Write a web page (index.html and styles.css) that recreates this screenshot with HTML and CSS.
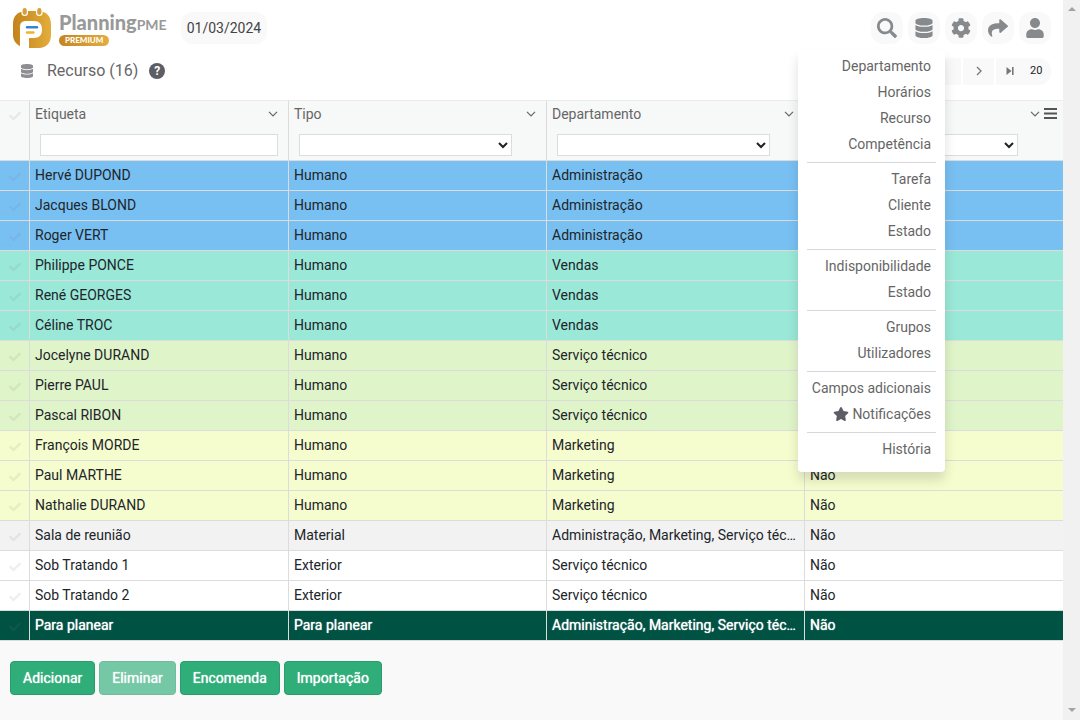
FILE: index.html
```html
<!DOCTYPE html>
<html lang="pt">
<head>
<meta charset="utf-8">
<title>PlanningPME - Recurso</title>
<link rel="stylesheet" href="styles.css">
</head>
<body>
<svg class="defs" aria-hidden="true">
  <symbol id="database" viewBox="0 0 448 512"><path d="M448 73.1v45.800C448 159.100 347.700 192 224 192S0 159.100 0 118.900V73.100C0 32.900 100.300 0 224 0s224 32.900 224 73.100zM448 176v102.900C448 319.100 347.700 352 224 352S0 319.100 0 278.900V176c48.100 33.100 136.200 48.600 224 48.600S399.900 209.100 448 176zm0 160v102.900C448 479.100 347.700 512 224 512S0 479.100 0 438.900V336c48.100 33.100 136.200 48.600 224 48.600S399.900 369.100 448 336z"/></symbol>
  <symbol id="check" viewBox="0 0 512 512"><path d="M173.900 439.400l-166.400-166.400c-10-10-10-26.200 0-36.200l36.200-36.200c10-10 26.200-10 36.200 0L192 312.700 432.100 72.600c10-10 26.200-10 36.200 0l36.200 36.200c10 10 10 26.200 0 36.200l-294.400 294.400c-10 10-26.200 10-36.200 0z"/></symbol>
  <symbol id="chevron" viewBox="0 0 10 6"><path d="M1 .8l4 4 4-4" fill="none" stroke="currentColor" stroke-width="1.200"/></symbol>
</svg>
<div class="page">
  <main class="app">
    <header class="topbar">
      <a class="brand" href="#" aria-label="PlanningPME Premium">
        <svg class="logo" viewBox="0 0 40 42">
          <defs><linearGradient id="gold" x1="0" x2="1"><stop offset="0" stop-color="#c3831c"/><stop offset="1" stop-color="#e3ad3b"/></linearGradient></defs>
          <path fill="url(#gold)" d="M14 4h12c8 0 13 5 13 13v11c0 8-5 13-12 13H17V31h5c5 0 8-3 8-8v-1c0-5-3-8-8-8h-8c-4 0-6 2-6 6v19C4 37 1 33 1 28V17C1 9 6 4 14 4z"/>
          <path d="M15 20.200h10" stroke="#2f86d2" stroke-width="2.400" stroke-linecap="round"/><path d="M15 25.500h6.500" stroke="#f0b32d" stroke-width="2.400" stroke-linecap="round"/>
          <g fill="#d99f32" stroke="#fff" stroke-width="1.200"><rect x="10" y=".5" width="5.400" height="8" rx="2.700"/><rect x="24.600" y=".5" width="5.400" height="8" rx="2.700"/></g>
        </svg>
        <span class="wordmark"><span class="name">Planning<span class="pme">PME</span></span><span class="premium">PREMIUM</span></span>
      </a>
      <button class="date">01/03/2024</button>
      <nav class="tools">
        <button class="tool" aria-label="Procurar"><svg viewBox="0 0 512 512"><path d="M505 442.700L405.300 343c-4.500-4.500-10.600-7-17-7H372c27.600-35.300 44-79.700 44-128C416 93.100 322.900 0 208 0S0 93.100 0 208s93.100 208 208 208c48.300 0 92.700-16.400 128-44v16.300c0 6.400 2.500 12.500 7 17l99.700 99.700c9.400 9.400 24.600 9.400 33.900 0l28.300-28.300c9.400-9.400 9.400-24.600.1-34zM208 346c-76 0-138-62-138-138S132 70 208 70s138 62 138 138-62 138-138 138z"/></svg></button>
        <div class="tool-menu">
          <button class="tool" aria-label="Dados" aria-expanded="true"><svg viewBox="0 0 448 512"><use href="#database"/></svg></button>
          <ul class="menu">
            <li><a href="#">Departamento</a></li>
            <li><a href="#">Horários</a></li>
            <li><a href="#">Recurso</a></li>
            <li><a href="#">Competência</a></li>
            <li class="first"><a href="#">Tarefa</a></li>
            <li><a href="#">Cliente</a></li>
            <li><a href="#">Estado</a></li>
            <li class="first"><a href="#">Indisponibilidade</a></li>
            <li><a href="#">Estado</a></li>
            <li class="first"><a href="#">Grupos</a></li>
            <li><a href="#">Utilizadores</a></li>
            <li class="first"><a href="#">Campos adicionais</a></li>
            <li><a href="#"><svg class="star" viewBox="0 0 576 512"><path d="M259.300 17.800L194 150.200 47.900 171.500c-26.200 3.800-36.700 36.100-17.700 54.600l105.700 103-25 145.500c-4.500 26.300 23.200 46 46.400 33.700L288 439.600l130.700 68.700c23.200 12.200 50.900-7.400 46.400-33.700l-25-145.500 105.700-103c19-18.500 8.500-50.800-17.700-54.600L382 150.200 316.700 17.800c-11.700-23.600-45.600-23.900-57.400 0z"/></svg>Notificações</a></li>
            <li class="first"><a href="#">História</a></li>
          </ul>
        </div>
        <button class="tool" aria-label="Configurações"><svg viewBox="0 0 512 512"><path d="M487.400 315.700l-42.600-24.600c4.300-23.200 4.300-47 0-70.200l42.600-24.600c4.900-2.800 7.100-8.600 5.500-14-11.100-35.600-30-67.800-54.700-94.600-3.800-4.100-10-5.100-14.800-2.300L380.800 110c-17.900-15.400-38.500-27.300-60.800-35.100V25.800c0-5.600-3.900-10.500-9.400-11.700-36.700-8.200-74.300-7.800-109.200 0-5.500 1.200-9.400 6.100-9.400 11.700V75c-22.200 7.900-42.800 19.800-60.800 35.100L88.700 85.500c-4.900-2.800-11-1.900-14.800 2.300-24.700 26.700-43.600 58.900-54.700 94.600-1.700 5.400.6 11.200 5.500 14L67.300 221c-4.300 23.200-4.300 47 0 70.200l-42.600 24.600c-4.900 2.800-7.100 8.600-5.500 14 11.100 35.600 30 67.800 54.700 94.600 3.800 4.100 10 5.100 14.800 2.300l42.600-24.600c17.900 15.400 38.500 27.300 60.800 35.100v49.200c0 5.600 3.900 10.500 9.400 11.700 36.700 8.200 74.300 7.800 109.200 0 5.500-1.200 9.400-6.100 9.400-11.700v-49.200c22.200-7.900 42.800-19.800 60.800-35.100l42.600 24.600c4.900 2.800 11 1.900 14.800-2.300 24.700-26.700 43.600-58.900 54.700-94.600 1.500-5.500-.7-11.300-5.600-14.100zM256 336c-44.100 0-80-35.900-80-80s35.900-80 80-80 80 35.900 80 80-35.900 80-80 80z"/></svg></button>
        <button class="tool" aria-label="Partilhar"><svg viewBox="0 0 512 512"><path d="M503.700 189.800L327.700 37.900C312.300 24.500 288 35.300 288 56v80.100C127.400 137.900 0 170.100 0 322.300c0 61.400 39.600 122.300 83.300 154.100 13.700 9.900 33.100-2.500 28.100-18.600C66.100 312.800 132.900 274.300 288 272.100V360c0 20.700 24.300 31.500 39.700 18.200l176-152c11.100-9.600 11.100-26.800 0-36.400z"/></svg></button>
        <button class="tool" aria-label="Conta"><svg viewBox="0 0 448 512"><path d="M224 256c70.700 0 128-57.300 128-128S294.700 0 224 0 96 57.300 96 128s57.300 128 128 128zm89.600 32h-16.700c-22.200 10.200-46.900 16-72.900 16s-50.600-5.800-72.900-16h-16.700C60.200 288 0 348.200 0 422.400V464c0 26.500 21.500 48 48 48h352c26.500 0 48-21.500 48-48v-41.600c0-74.200-60.200-134.400-134.400-134.400z"/></svg></button>
      </nav>
    </header>
    <section class="titlebar">
      <svg class="title-icon" viewBox="0 0 448 512"><use href="#database"/></svg>
      <h1>Recurso (16)</h1>
      <button class="help" aria-label="Ajuda">?</button>
      <div class="pager">
        <button class="current" aria-label="Página atual"></button>
        <button aria-label="Página seguinte"><svg viewBox="0 0 12 12"><path d="M4 2l4 4-4 4" fill="none" stroke="#777" stroke-width="1.300"/></svg></button>
        <button class="last" aria-label="Última página"><svg viewBox="0 0 12 12"><path d="M2.500 2v8l5-4zM8 2h1.600v8H8z" fill="#777"/></svg></button>
        <select aria-label="Linhas por página"><option>20</option></select>
      </div>
    </section>
    <table class="grid">
      <colgroup><col class="col-check"><col class="col-label"><col><col><col></colgroup>
      <thead>
        <tr>
          <th class="tick"><svg><use href="#check"/></svg></th>
          <th><div class="head"><label for="f1">Etiqueta</label><svg class="chev"><use href="#chevron"/></svg></div><div class="filter"><input id="f1" type="text"></div></th>
          <th><div class="head"><label for="f2">Tipo</label><svg class="chev"><use href="#chevron"/></svg></div><div class="filter"><select id="f2"><option></option></select></div></th>
          <th><div class="head"><label for="f3">Departamento</label><svg class="chev"><use href="#chevron"/></svg></div><div class="filter"><select id="f3"><option></option></select></div></th>
          <th class="end"><div class="head"><svg class="chev"><use href="#chevron"/></svg><button class="columns" aria-label="Colunas"><svg viewBox="0 0 13 11"><path d="M0 1h13M0 5.500h13M0 10h13" stroke="#555" stroke-width="2"/></svg></button></div><div class="filter"><select aria-label="Filtro"><option></option></select></div></th>
        </tr>
      </thead>
      <tbody id="rows"></tbody>
    </table>
    <footer class="actions">
      <button>Adicionar</button>
      <button disabled>Eliminar</button>
      <button>Encomenda</button>
      <button>Importação</button>
    </footer>
  </main>
  <div class="scroll" aria-hidden="true"><i class="up"></i><i class="down"></i></div>
</div>
<script src="rows.js"></script>
</body>
</html>
```
FILE: rows.js
```js
const all = "Administração, Marketing, Serviço técnico, Vendas";
const resources = [
  ["blue", "Hervé DUPOND", "Humano", "Administração"],
  ["blue", "Jacques BLOND", "Humano", "Administração"],
  ["blue", "Roger VERT", "Humano", "Administração"],
  ["teal", "Philippe PONCE", "Humano", "Vendas"],
  ["teal", "René GEORGES", "Humano", "Vendas"],
  ["teal", "Céline TROC", "Humano", "Vendas"],
  ["green", "Jocelyne DURAND", "Humano", "Serviço técnico"],
  ["green", "Pierre PAUL", "Humano", "Serviço técnico"],
  ["green", "Pascal RIBON", "Humano", "Serviço técnico"],
  ["yellow", "François MORDE", "Humano", "Marketing"],
  ["yellow", "Paul MARTHE", "Humano", "Marketing"],
  ["yellow", "Nathalie DURAND", "Humano", "Marketing"],
  ["gray", "Sala de reunião", "Material", all],
  ["white", "Sob Tratando 1", "Exterior", "Serviço técnico"],
  ["white", "Sob Tratando 2", "Exterior", "Serviço técnico"],
  ["dark", "Para planear", "Para planear", all]
];
document.getElementById("rows").innerHTML = resources.map(([tone, ...cells], i) =>
  `<tr class="${tone}"><td class="tick"><svg><use href="#check"/></svg></td>` +
  cells.map(c => `<td>${c}</td>`).join("") +
  `<td>${i < 10 ? "" : "Não"}</td></tr>`).join("");
```
FILE: styles.css
```css
* { box-sizing: border-box; }
body { margin: 0; font: 14px/20px Roboto, "Liberation Sans", sans-serif; color: #212529; background: #f9f9f9; }
button, input, select { font: inherit; color: inherit; margin: 0; }
button { border: 0; padding: 0; background: none; cursor: pointer; }
a { color: inherit; text-decoration: none; }
.defs { position: absolute; width: 0; height: 0; }
.page { display: flex; min-height: 100vh; }
.app { flex: 1; min-width: 0; }

.topbar { display: flex; align-items: center; height: 56px; padding: 0 12px; background: #fff; }
.brand { display: flex; align-items: center; gap: 7px; }
.logo { width: 40px; height: 42px; overflow: visible; }
.wordmark { display: flex; flex-direction: column; align-items: flex-start; padding-top: 1px; }
.name { font: 900 20px/20px Lato, sans-serif; color: #999; }
.pme { font-size: 14px; font-weight: 700; }
.premium { padding: 0 6px; border-radius: 6px; font: 900 8px/11px Lato, sans-serif; color: #fff; background: linear-gradient(90deg, #c6851f, #e2ad40); }
.date { margin-left: 14px; height: 32px; padding: 0 6px; border-radius: 12px; background: #f9f9f9; color: #444; }
.tools { display: flex; gap: 5px; margin-left: auto; }
.tool { display: flex; align-items: center; justify-content: center; width: 32px; height: 32px; border-radius: 12px; background: #f9f9f9; }
.tool svg { width: 20px; height: 20px; fill: #868a8c; }
.tool-menu { position: relative; }
.menu { position: absolute; z-index: 2; top: 38px; right: -5px; margin: 0; padding: 3px 14px 10px; list-style: none; background: #fff; border-radius: 0 0 4px 4px; box-shadow: 0 8px 12px rgba(0, 0, 0, .13); text-align: right; white-space: nowrap; color: #666; }
.menu a { display: block; line-height: 26px; }
.menu .first::before { content: ""; display: block; height: 1px; margin: 5px -5px 3px; background: #d8d8dc; }
.star { width: 16px; height: 14px; margin-right: 3px; vertical-align: -2px; fill: #5d5d66; }

.titlebar { display: flex; align-items: center; height: 44px; padding: 0 12px 14px 20px; background: #fff; }
.title-icon { width: 14px; height: 14px; fill: #8d8d92; }
h1 { margin: 0 11px 0 13px; font-size: 16px; font-weight: 400; color: #666; }
.help { width: 16px; height: 16px; border-radius: 8px; background: #5d5d66; color: #fff; font-size: 12px; font-weight: 700; line-height: 16px; }
.pager { display: flex; gap: 2px; margin-left: auto; height: 27px; border-radius: 12px; overflow: hidden; font-size: 11px; color: #222; }
.pager button { width: 31px; background: #f9f9f9; }
.pager .last { width: 27px; }
.pager svg { width: 12px; height: 12px; vertical-align: middle; }
.pager select { appearance: none; margin-left: -2px; width: 28px; border: 0; padding: 0 8px 0 7px; background: #f9f9f9; }

.grid { width: 100%; table-layout: fixed; border-collapse: separate; border-spacing: 0; }
.col-check { width: 30px; }
.col-label { width: 259px; }
th, td { border-right: 1px solid #dcdcdc; border-bottom: 1px solid #dcdcdc; text-align: left; font-weight: inherit; }
th:last-child, td:last-child { border-right: 0; }
th { height: 61px; padding: 0; border-top: 1px solid #ececec; background: #f7f8f8; color: #666; vertical-align: top; }
td { height: 30px; padding: 0 5px 2px; overflow: hidden; white-space: nowrap; text-overflow: ellipsis; }
.tick svg { display: block; width: 12px; height: 12px; fill: rgba(120, 120, 120, .12); }
th.tick { padding: 9px; }
td.tick { padding: 2px 9px 0; }
.head { display: flex; align-items: center; gap: 4px; height: 25px; padding: 0 10px 0 5px; }
.chev { width: 10px; height: 6px; margin-left: auto; }
.filter { padding: 8px 10px 0; }
.filter input, .filter select { display: block; height: 22px; border: 1px solid #ddd; border-radius: 0; background: #fff; color: #222; }
.filter input { width: 100%; }
.filter select { width: 90%; }
.end .head { padding-right: 6px; }
.end .filter { padding-right: 22px; }
.columns { display: flex; width: 13px; }
.columns svg { width: 13px; height: 11px; }
.blue { background: #78c0f2; }
.teal { background: #9ae8d8; }
.green { background: #e0f4c9; }
.yellow { background: #f5fcce; }
.gray { background: #f2f2f2; }
.white { background: #fff; }
.dark { background: #005243; color: #fff; text-shadow: 0 0 1px #fff; }

.actions { display: flex; gap: 4px; padding: 20px 10px; }
.actions button { height: 34px; padding: 0 12px; border: 1px solid #2a9d6e; border-radius: 4px; background: #2fae79; color: #fff; text-shadow: 0 0 1px #fff; }
.actions button:disabled { opacity: .65; }

.scroll { display: flex; flex-direction: column; justify-content: space-between; align-items: center; width: 17px; padding: 7px 0 8px; background: #f1f1f1; }
.up, .down { border: 4px solid transparent; }
.up { border-top: 0; border-bottom-color: #a3a3a3; }
.down { border-bottom: 0; border-top-color: #a3a3a3; }
```
